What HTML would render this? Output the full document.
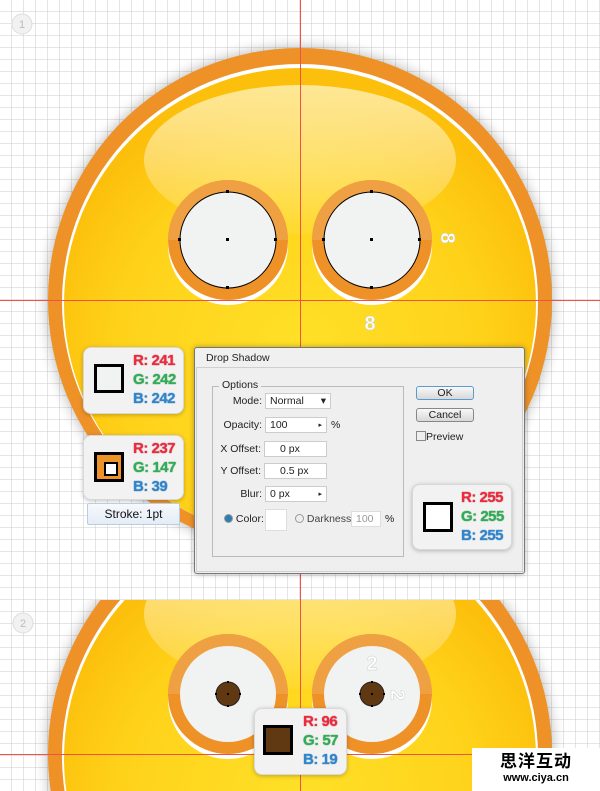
<!DOCTYPE html>
<html><head><meta charset="utf-8"><style>
html,body{margin:0;width:600px;height:791px;overflow:hidden}
body{position:relative;background:#fff;font-family:"Liberation Sans",Arial,sans-serif}
.card{position:absolute;background:#f2f2f2;border:1px solid #d8d8d8;border-radius:8px;box-shadow:0 1px 4px rgba(0,0,0,.25)}
.sw{position:absolute;border:3px solid #000;box-sizing:border-box}
.rgb{position:absolute;font-weight:bold;font-size:15px;line-height:19px;letter-spacing:-.5px}
.r{color:#ee2a3c;text-shadow:0 0 1px #a0101c}
.g{color:#2fae55;text-shadow:0 0 1px #137030}
.b{color:#2e86cf;text-shadow:0 0 1px #135a95}
.dlg{position:absolute;left:194px;top:347px;width:329px;height:225px;background:#f0f0f0;border:1px solid #777;border-radius:3px;box-shadow:0 0 6px rgba(0,0,0,.3);font-size:10.5px;color:#222}
.lbl{position:absolute;text-align:right;width:60px}
.fld{position:absolute;background:#fff;border:1px solid #ccc;height:16px;line-height:15px;padding-left:4px;box-sizing:border-box}
.btn{position:absolute;border:1px solid #888;border-radius:3px;background:linear-gradient(#f8f8f8,#d8d8d8);text-align:center;height:14px;line-height:13px;box-sizing:border-box}
</style></head><body>
<svg width="600" height="791" style="position:absolute;left:0;top:0">
<defs>
<pattern id="grid" width="12" height="12" patternUnits="userSpaceOnUse"><path d="M12 0V12M0 12H12" stroke="#cbcbcb" stroke-width="1" fill="none"/></pattern>
<radialGradient id="yg" cx="50%" cy="60%" r="55%"><stop offset="0" stop-color="#ffe028"/><stop offset=".7" stop-color="#ffd21a"/><stop offset="1" stop-color="#fcc00c"/></radialGradient>
<linearGradient id="hl" x1="0" y1="0" x2="0" y2="1"><stop offset="0" stop-color="#fff2b8" stop-opacity=".8"/><stop offset="1" stop-color="#fff" stop-opacity=".05"/></linearGradient>
<filter id="sh" x="-20%" y="-20%" width="140%" height="140%"><feGaussianBlur stdDeviation="7"/></filter>
<clipPath id="c1"><rect x="0" y="0" width="600" height="590"/></clipPath>
<clipPath id="c2"><rect x="0" y="600" width="600" height="191"/></clipPath>
</defs>
<rect width="600" height="791" fill="url(#grid)"/>
<g clip-path="url(#c1)">
<circle cx="300" cy="300" r="252" fill="#000" opacity=".3" filter="url(#sh)"/>
<circle cx="300" cy="300" r="252" fill="#ee9227"/>
<circle cx="300" cy="302" r="238" fill="#fff"/>
<circle cx="300" cy="304" r="236" fill="url(#yg)"/>
<ellipse cx="300" cy="160" rx="156" ry="75" fill="url(#hl)"/>
<circle cx="228" cy="245" r="60" fill="#fff"/><circle cx="228" cy="240" r="60" fill="#ee9227"/>
<path d="M168 240A60 60 0 0 1 288 240" fill="#f0a650" opacity=".7"/>
<circle cx="228" cy="240" r="48" fill="#f1f2f2" stroke="#000" stroke-width="1"/>
<circle cx="372" cy="245" r="60" fill="#fff"/><circle cx="372" cy="240" r="60" fill="#ee9227"/>
<path d="M312 240A60 60 0 0 1 432 240" fill="#f0a650" opacity=".7"/>
<circle cx="372" cy="240" r="48" fill="#f1f2f2" stroke="#000" stroke-width="1"/>
<g fill="#000"><rect x="226" y="190" width="3" height="3"/><rect x="226" y="286" width="3" height="3"/><rect x="178" y="238" width="3" height="3"/><rect x="274" y="238" width="3" height="3"/><rect x="226" y="238" width="3" height="3"/>
<rect x="370" y="190" width="3" height="3"/><rect x="370" y="286" width="3" height="3"/><rect x="322" y="238" width="3" height="3"/><rect x="418" y="238" width="3" height="3"/><rect x="370" y="238" width="3" height="3"/></g>
<text x="370" y="330" font-size="20" font-weight="bold" fill="#fff" stroke="#ccc" stroke-width=".5" text-anchor="middle">8</text>
<text x="448" y="245" font-size="20" font-weight="bold" fill="#fff" stroke="#ccc" stroke-width=".5" text-anchor="middle" transform="rotate(90 448 238)">8</text>
</g>
<g clip-path="url(#c2)">
<circle cx="300" cy="754" r="252" fill="#000" opacity=".3" filter="url(#sh)"/>
<circle cx="300" cy="754" r="252" fill="#ee9227"/>
<circle cx="300" cy="756" r="238" fill="#fff"/>
<circle cx="300" cy="758" r="236" fill="url(#yg)"/>
<ellipse cx="300" cy="614" rx="156" ry="75" fill="url(#hl)"/>
<circle cx="228" cy="699" r="60" fill="#fff"/><circle cx="228" cy="694" r="60" fill="#ee9227"/>
<path d="M168 694A60 60 0 0 1 288 694" fill="#f0a650" opacity=".7"/>
<circle cx="228" cy="694" r="48" fill="#f1f2f2"/>
<circle cx="372" cy="699" r="60" fill="#fff"/><circle cx="372" cy="694" r="60" fill="#ee9227"/>
<path d="M312 694A60 60 0 0 1 432 694" fill="#f0a650" opacity=".7"/>
<circle cx="372" cy="694" r="48" fill="#f1f2f2"/>
<circle cx="228" cy="694" r="12" fill="#603913" stroke="#222" stroke-width="1"/>
<circle cx="372" cy="694" r="12" fill="#603913" stroke="#222" stroke-width="1"/>
<g fill="#000"><rect x="227" y="693" width="2" height="2"/><rect x="371" y="693" width="2" height="2"/><rect x="227" y="681" width="2" height="2"/><rect x="227" y="705" width="2" height="2"/><rect x="215" y="693" width="2" height="2"/><rect x="239" y="693" width="2" height="2"/><rect x="371" y="681" width="2" height="2"/><rect x="371" y="705" width="2" height="2"/><rect x="359" y="693" width="2" height="2"/><rect x="383" y="693" width="2" height="2"/></g>
<text x="372" y="670" font-size="20" font-weight="bold" fill="#fff" stroke="#ccc" stroke-width=".5" text-anchor="middle">2</text>
<text x="398" y="702" font-size="20" font-weight="bold" fill="#fff" stroke="#ccc" stroke-width=".5" text-anchor="middle" transform="rotate(90 398 695)">2</text>
</g>
<line x1="300.5" y1="0" x2="300.5" y2="791" stroke="#f0504a" stroke-width="1"/>
<line x1="0" y1="300.5" x2="600" y2="300.5" stroke="#f0504a" stroke-width="1"/>
<line x1="0" y1="754.5" x2="600" y2="754.5" stroke="#f0504a" stroke-width="1"/>
<circle cx="22" cy="24" r="10" fill="#f1f1f1" stroke="#ddd"/><text x="22" y="28" font-size="11" fill="#bbb" text-anchor="middle">1</text>
<circle cx="23" cy="623" r="10" fill="#f1f1f1" stroke="#ddd"/><text x="23" y="627" font-size="11" fill="#bbb" text-anchor="middle">2</text>
</svg>

<div class="card" style="left:83px;top:347px;width:99px;height:65px">
<div class="sw" style="left:10px;top:16px;width:30px;height:29px;background:#f1f2f2"></div>
<div class="rgb" style="left:49px;top:3px"><div class="r">R: 241</div><div class="g">G: 242</div><div class="b">B: 242</div></div></div>
<div class="card" style="left:83px;top:435px;width:99px;height:63px">
<div class="sw" style="left:10px;top:16px;width:30px;height:30px;background:#ee9327"><div style="position:absolute;left:7px;top:7px;width:10px;height:10px;border:2px solid #000;background:#fff"></div></div>
<div class="rgb" style="left:49px;top:3px"><div class="r">R: 237</div><div class="g">G: 147</div><div class="b">B: 39</div></div></div>
<div style="position:absolute;left:87px;top:503px;width:93px;height:22px;background:linear-gradient(#f6f9fd,#e4ecf6);border:1px solid #b9cde3;border-radius:2px;font-size:12px;text-align:center;line-height:20px;color:#111;box-sizing:border-box">Stroke: 1pt</div>

<div class="dlg">
<div style="position:absolute;left:11px;top:4px">Drop Shadow</div>
<div style="position:absolute;left:1px;top:19px;right:1px;bottom:1px;border:1px solid #cfcfcf;background:#efefef"></div>
<div style="position:absolute;left:17px;top:38px;width:190px;height:169px;border:1px solid #bbb"></div>
<div style="position:absolute;left:24px;top:31px;background:#efefef;padding:0 3px">Options</div>
<div class="lbl" style="left:7px;top:47px">Mode:</div><div class="fld" style="left:70px;top:45px;width:66px">Normal<span style="position:absolute;right:4px">▾</span></div>
<div class="lbl" style="left:7px;top:71px">Opacity:</div><div class="fld" style="left:70px;top:69px;width:62px">100<span style="position:absolute;right:4px;font-size:7px">▸</span></div><div style="position:absolute;left:136px;top:71px">%</div>
<div class="lbl" style="left:6px;top:95px">X Offset:</div><div class="fld" style="left:69px;top:93px;width:63px;padding-left:15px">0 px</div>
<div class="lbl" style="left:6px;top:117px">Y Offset:</div><div class="fld" style="left:69px;top:115px;width:63px;padding-left:15px">0.5 px</div>
<div class="lbl" style="left:7px;top:140px">Blur:</div><div class="fld" style="left:70px;top:138px;width:62px">0 px<span style="position:absolute;right:4px;font-size:7px">▸</span></div>
<div style="position:absolute;left:29px;top:165px"><span style="display:inline-block;width:7px;height:7px;border-radius:50%;background:#2c7fb0;border:1px solid #999;vertical-align:-1px"></span> Color:</div>
<div style="position:absolute;left:70px;top:161px;width:20px;height:20px;background:#fff;border:1px solid #ddd"></div>
<div style="position:absolute;left:100px;top:165px;color:#444"><span style="display:inline-block;width:7px;height:7px;border-radius:50%;background:#eee;border:1px solid #999;vertical-align:-1px"></span> Darkness:</div>
<div class="fld" style="left:156px;top:163px;width:30px;color:#999;border-color:#ddd">100</div><div style="position:absolute;left:190px;top:165px">%</div>
<div class="btn" style="left:221px;top:38px;width:58px;border-color:#5a9bd0">OK</div>
<div class="btn" style="left:221px;top:60px;width:58px">Cancel</div>
<div style="position:absolute;left:221px;top:83px"><span style="display:inline-block;width:8px;height:8px;border:1px solid #888;background:#eee;vertical-align:-1px"></span>Preview</div>
</div>

<div class="card" style="left:412px;top:484px;width:98px;height:64px">
<div class="sw" style="left:10px;top:17px;width:30px;height:30px;background:#fff"></div>
<div class="rgb" style="left:48px;top:3px"><div class="r">R: 255</div><div class="g">G: 255</div><div class="b">B: 255</div></div></div>
<div class="card" style="left:254px;top:708px;width:91px;height:65px">
<div class="sw" style="left:8px;top:16px;width:30px;height:30px;background:#603913"></div>
<div class="rgb" style="left:48px;top:3px"><div class="r">R: 96</div><div class="g">G: 57</div><div class="b">B: 19</div></div></div>
<div style="position:absolute;left:472px;top:748px;width:128px;height:43px;background:#fff;text-align:center;color:#000;overflow:hidden">
<div style="font-family:'Liberation Sans','Noto Sans CJK SC',sans-serif;font-size:17px;line-height:20px;margin-top:4px;letter-spacing:1px;font-weight:bold">思洋互动</div>
<div style="font-size:11px;font-weight:bold;line-height:13px">www.ciya.cn</div></div>
</body></html>
